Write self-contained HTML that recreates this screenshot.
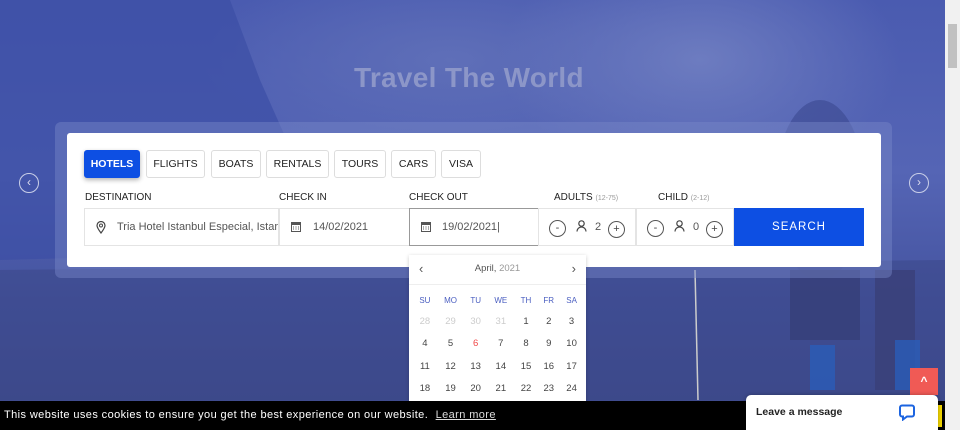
<!DOCTYPE html>
<html><head><meta charset="utf-8"><style>
*{box-sizing:border-box;margin:0;padding:0}
body{width:960px;height:430px;overflow:hidden;position:relative;font-family:"Liberation Sans",sans-serif;background:#3d4f9e}
.bg{position:absolute;left:0;top:0;width:945px;height:430px;background:
radial-gradient(ellipse 200px 120px at 700px 60px,#6d7cc0,transparent),
radial-gradient(ellipse 250px 100px at 450px 60px,#5f6fb8,transparent),
linear-gradient(180deg,#4a5bb0 0%,#5565b5 40%,#44539f 70%,#3e4a8a 100%)}
.sb{position:absolute;right:0;top:0;width:15px;height:430px;background:#f1f1f1}
.sb i{position:absolute;left:3px;top:24px;width:9px;height:44px;background:#c1c1c1}
h1{position:absolute;left:354px;top:62px;font-size:28px;color:#8c96c8;font-weight:bold;letter-spacing:0.3px}
.outer{position:absolute;left:55px;top:122px;width:837px;height:156px;background:rgba(120,135,200,.45);border-radius:6px}
.card{position:absolute;left:67px;top:133px;width:814px;height:134px;background:#fff;border-radius:3px}
.tab{position:absolute;top:150px;height:28px;border:1px solid #ddd;border-radius:3px;font-size:10.5px;color:#222;line-height:26px;text-align:center;background:#fff}
.tab.a{background:#0d4fe3;color:#fff;font-weight:bold;border-color:#0d4fe3;box-shadow:0 2px 5px rgba(0,0,0,.3)}
.lb{position:absolute;top:192px;font-size:10px;color:#222}
.lb small{font-size:7px;color:#999}
.inp{position:absolute;top:208px;height:38px;border:1px solid #e4e4e4;font-size:11px;color:#555;line-height:36px}
.search{position:absolute;left:734px;top:208px;width:130px;height:38px;background:#0d4fe3;color:#fff;font-size:11.5px;letter-spacing:1px;text-align:center;line-height:38px}
.circ{position:absolute;top:220px;width:17px;height:17px;border:1px solid #555;border-radius:50%;font-size:11px;line-height:14px;text-align:center;color:#444}
.cal{position:absolute;left:409px;top:255px;width:177px;height:150px;background:#fff;box-shadow:0 1px 4px rgba(0,0,0,.2)}
.cal .h{height:30px;border-bottom:1px solid #eee;font-size:9.5px;color:#555;text-align:center;line-height:28px}
.cal table{position:absolute;left:4px;top:36px;width:170px;border-collapse:collapse}
.cal td{text-align:center;font-size:9.5px;color:#444;height:22.5px}
.cal tr.d td{color:#4a5ec0;font-size:8px;height:20px}
.g{color:#ccc!important}
.cookie{position:absolute;left:0;top:401px;width:945px;height:29px;background:#000;color:#fff;font-size:11px;line-height:28px;padding-left:4px;letter-spacing:.4px}
.cookie u{color:#ddd;margin-left:4px}
.chat{position:absolute;left:746px;top:395px;width:192px;height:35px;background:#fff;border-radius:5px 5px 0 0;box-shadow:0 0 4px rgba(0,0,0,.3);font-size:10.5px;font-weight:bold;color:#222;padding:11px 10px}
.yel{position:absolute;left:920px;top:405px;width:22px;height:22px;background:#f2d600}
.up{position:absolute;left:910px;top:368px;width:28px;height:27px;background:#f05a55;color:#fff;text-align:center;font-size:12px;line-height:27px;font-weight:bold}
.arr{position:absolute;top:173px;width:20px;height:20px;border:1.5px solid #c9cfe8;border-radius:50%;color:#dde;font-size:12px;line-height:16px;text-align:center}
</style></head><body>
<div class="bg"></div>
<svg style="position:absolute;left:0;top:0" width="945" height="430">
<polygon points="0,0 80,0 230,0 260,80 300,170 360,250 0,260" fill="#3c4fa5" opacity=".7"/>
<polygon points="0,270 945,260 945,400 0,400" fill="#3a4585" opacity=".5"/>
<ellipse cx="820" cy="190" rx="45" ry="90" fill="#3a4890" opacity=".6"/>
<rect x="790" y="270" width="70" height="70" fill="#363f78" opacity=".8"/>
<rect x="810" y="345" width="25" height="45" fill="#2a5cb8" opacity=".8"/>
<rect x="875" y="270" width="40" height="120" fill="#3a4078" opacity=".8"/>
<rect x="895" y="340" width="25" height="50" fill="#2a5cb8" opacity=".8"/>
<line x1="695" y1="270" x2="698" y2="400" stroke="#ccc" stroke-width="1.5"/>
</svg>
<div class="sb"><i></i></div>
<h1>Travel The World</h1>
<div class="arr" style="left:19px">‹</div>
<div class="arr" style="left:909px">›</div>
<div class="outer"></div>
<div class="card"></div>
<div class="tab a" style="left:84px;width:56px">HOTELS</div>
<div class="tab" style="left:146px;width:59px">FLIGHTS</div>
<div class="tab" style="left:211px;width:50px">BOATS</div>
<div class="tab" style="left:266px;width:63px">RENTALS</div>
<div class="tab" style="left:334px;width:52px">TOURS</div>
<div class="tab" style="left:391px;width:45px">CARS</div>
<div class="tab" style="left:441px;width:40px">VISA</div>
<div class="lb" style="left:85px">DESTINATION</div>
<div class="lb" style="left:279px">CHECK IN</div>
<div class="lb" style="left:409px">CHECK OUT</div>
<div class="lb" style="left:554px">ADULTS <small>(12-75)</small></div>
<div class="lb" style="left:658px">CHILD <small>(2-12)</small></div>
<div class="inp" style="left:84px;width:195px;padding-left:32px;white-space:nowrap;overflow:hidden">Tria Hotel Istanbul Especial, Istar</div>
<svg style="position:absolute;left:96px;top:221px" width="10" height="13" viewBox="0 0 10 13"><path d="M5 12C2 8 1 6 1 4.5a4 4 0 018 0C9 6 8 8 5 12z" fill="none" stroke="#444" stroke-width="1.2"/><circle cx="5" cy="4.5" r="1.5" fill="none" stroke="#444"/></svg>
<div class="inp" style="left:279px;width:131px;padding-left:33px">14/02/2021</div>
<div class="inp" style="left:409px;width:130px;padding-left:32px;border-color:#999">19/02/2021|</div>
<svg style="position:absolute;left:291px;top:221px" width="10" height="11"><rect x=".5" y="1.5" width="9" height="9" fill="none" stroke="#555"/><rect x=".5" y="1.5" width="9" height="2.5" fill="#555"/><path d="M2 6h1M4.5 6h1M7 6h1M2 8h1M4.5 8h1M7 8h1" stroke="#555"/></svg>
<svg style="position:absolute;left:421px;top:221px" width="10" height="11"><rect x=".5" y="1.5" width="9" height="9" fill="none" stroke="#555"/><rect x=".5" y="1.5" width="9" height="2.5" fill="#555"/><path d="M2 6h1M4.5 6h1M7 6h1M2 8h1M4.5 8h1M7 8h1" stroke="#555"/></svg>
<div class="inp" style="left:538px;width:98px"></div>
<div class="inp" style="left:636px;width:98px"></div>
<div class="circ" style="left:549px">-</div><div class="circ" style="left:608px;top:221px">+</div>
<div class="circ" style="left:647px">-</div><div class="circ" style="left:706px;top:221px">+</div>
<svg style="position:absolute;left:576px;top:220px" width="11" height="12"><circle cx="5.5" cy="3.5" r="2.7" fill="none" stroke="#444" stroke-width="1.2"/><path d="M1 11.5a4.5 4.5 0 019 0" fill="none" stroke="#444" stroke-width="1.2"/></svg>
<svg style="position:absolute;left:674px;top:220px" width="11" height="12"><circle cx="5.5" cy="3.5" r="2.7" fill="none" stroke="#444" stroke-width="1.2"/><path d="M1 11.5a4.5 4.5 0 019 0" fill="none" stroke="#444" stroke-width="1.2"/></svg>
<div style="position:absolute;left:595px;top:221px;font-size:11px;color:#555">2</div>
<div style="position:absolute;left:693px;top:221px;font-size:11px;color:#555">0</div>
<div class="search">SEARCH</div>
<div class="cal"><div class="h"><span style="float:left;margin-left:10px;font-size:13px">‹</span>April, <span style="color:#999">2021</span><span style="float:right;margin-right:10px;font-size:13px">›</span></div>
<table style="top:35px">
<tr class="d"><td>SU</td><td>MO</td><td>TU</td><td>WE</td><td>TH</td><td>FR</td><td>SA</td></tr>
<tr><td class="g">28</td><td class="g">29</td><td class="g">30</td><td class="g">31</td><td>1</td><td>2</td><td>3</td></tr>
<tr><td>4</td><td>5</td><td style="color:#f04848">6</td><td>7</td><td>8</td><td>9</td><td>10</td></tr>
<tr><td>11</td><td>12</td><td>13</td><td>14</td><td>15</td><td>16</td><td>17</td></tr>
<tr><td>18</td><td>19</td><td>20</td><td>21</td><td>22</td><td>23</td><td>24</td></tr>
</table></div>
<div class="up">^</div>
<div class="cookie">This website uses cookies to ensure you get the best experience on our website. <u>Learn more</u></div>
<div class="yel"></div>
<div class="chat">Leave a message
<svg style="position:absolute;right:23px;top:9px" width="16" height="17"><path d="M3 1.5h10a2 2 0 012 2v7a2 2 0 01-2 2H8l-4 3v-3H3a2 2 0 01-2-2v-7a2 2 0 012-2z" fill="none" stroke="#1c64e0" stroke-width="2"/></svg></div>
</body></html>
